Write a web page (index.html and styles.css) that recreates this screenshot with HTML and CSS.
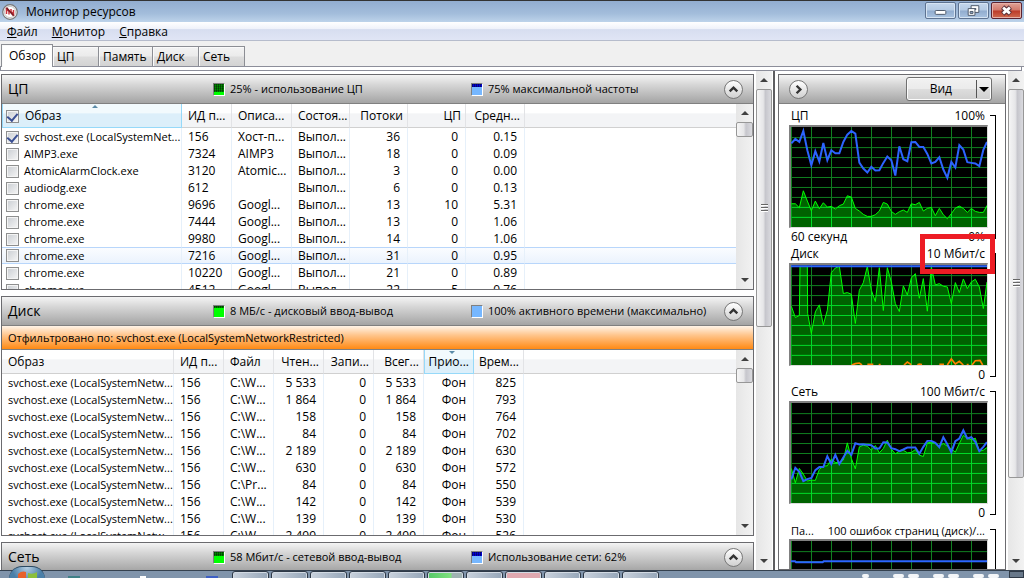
FILE: index.html
```html
<!DOCTYPE html>
<html lang="ru">
<head>
<meta charset="utf-8">
<title>Монитор ресурсов</title>
<link rel="stylesheet" href="styles.css">
</head>
<body>
<div class="screen">
  <header class="titlebar">
    <svg class="app-icon" viewBox="0 0 16 16"><circle cx="8" cy="8" r="7.3" fill="#f4f4f4" stroke="#777" stroke-width="1.2"/><circle cx="8" cy="8" r="5.6" fill="#fff" stroke="#aaa" stroke-width=".6"/><path d="M4.5 10V4.8L7 7.4v3M9 5v2.5l2.5 3V6" fill="none" stroke="#c8343c" stroke-width="1.5"/><path d="M4.6 3.8l7 8" stroke="#7d1c24" stroke-width="1.6"/></svg>
    <h1 class="title">Монитор ресурсов</h1>
    <div class="window-buttons">
      <button class="win-btn" aria-label="Свернуть"><svg viewBox="0 0 30 15"><rect x="9.500" y="7.500" width="11" height="4" rx="1" fill="#fff" stroke="#4d5869"/></svg></button>
      <button class="win-btn" aria-label="Восстановить"><svg viewBox="0 0 30 15"><path d="M12.500 2.500h8v7h-8z" fill="#fff" stroke="#4d5869"/><path d="M15.500 5.500h2v1h-2z" fill="#8fa9c8" stroke="#4d5869"/><path d="M9.500 5.500h7v7h-7z" fill="#fff" stroke="#4d5869"/><path d="M11.500 8.500h3v2h-3z" fill="#8fa9c8" stroke="#4d5869"/></svg></button>
      <button class="win-btn win-close" aria-label="Закрыть"><svg viewBox="0 0 30 15"><path d="M11 4l8 7M19 4l-8 7" stroke="#5a3038" stroke-width="5"/><path d="M11.500 4.500l7 6M18.500 4.500l-7 6" stroke="#fff" stroke-width="2.800"/></svg></button>
    </div>
  </header>
  <nav class="menubar">
    <button class="menu"><u>Ф</u>айл</button>
    <button class="menu"><u>М</u>онитор</button>
    <button class="menu"><u>С</u>правка</button>
  </nav>
  <div class="tabs" role="tablist">
    <button class="tab active" role="tab" aria-selected="true">Обзор</button>
    <button class="tab tab-s" role="tab">ЦП</button>
    <button class="tab tab-l" role="tab">Память</button>
    <button class="tab tab-s" role="tab">Диск</button>
    <button class="tab tab-s" role="tab">Сеть</button>
  </div>
  <div class="tab-edge"></div>
  <main class="workspace">
    <div class="panels">
      <section class="panel">
        <div class="panel-head">
          <h2>ЦП</h2>
          <span class="meter"><i class="led green"><b class="lvl-25"></b></i>25% - использование ЦП</span>
          <span class="meter"><i class="led blue"><b class="lvl-75"></b></i>75% максимальной частоты</span>
          <button class="round" aria-label="Свернуть ЦП"><svg viewBox="0 0 18 18"><path d="M5 11l4-4 4 4" fill="none" stroke="#333" stroke-width="2.500"/></svg></button>
        </div>
        <div class="list">
          <table class="grid cpu">
            <colgroup><col class="w-cpu-name"><col class="w50"><col class="w60"><col class="w58"><col class="w58"><col class="w58"><col class="w59"><col></colgroup>
            <thead><tr><th class="sorted up"><label><input type="checkbox" checked>Образ</label></th><th>ИД п...</th><th>Описа...</th><th>Состоя...</th><th class="n">Потоки</th><th class="n">ЦП</th><th class="n">Средн...</th><th></th></tr></thead>
            <tbody>
              <tr><td><label><input type="checkbox" checked>svchost.exe (LocalSystemNet...</label></td><td>156</td><td>Хост-п...</td><td>Выпол...</td><td class="n">36</td><td class="n">0</td><td class="n">0.15</td><td></td></tr>
              <tr><td><label><input type="checkbox">AIMP3.exe</label></td><td>7324</td><td>AIMP3</td><td>Выпол...</td><td class="n">18</td><td class="n">0</td><td class="n">0.09</td><td></td></tr>
              <tr><td><label><input type="checkbox">AtomicAlarmClock.exe</label></td><td>3120</td><td>Atomic...</td><td>Выпол...</td><td class="n">3</td><td class="n">0</td><td class="n">0.00</td><td></td></tr>
              <tr><td><label><input type="checkbox">audiodg.exe</label></td><td>612</td><td></td><td>Выпол...</td><td class="n">6</td><td class="n">0</td><td class="n">0.13</td><td></td></tr>
              <tr><td><label><input type="checkbox">chrome.exe</label></td><td>9696</td><td>Googl...</td><td>Выпол...</td><td class="n">13</td><td class="n">10</td><td class="n">5.31</td><td></td></tr>
              <tr><td><label><input type="checkbox">chrome.exe</label></td><td>7444</td><td>Googl...</td><td>Выпол...</td><td class="n">13</td><td class="n">0</td><td class="n">1.06</td><td></td></tr>
              <tr><td><label><input type="checkbox">chrome.exe</label></td><td>9980</td><td>Googl...</td><td>Выпол...</td><td class="n">14</td><td class="n">0</td><td class="n">1.06</td><td></td></tr>
              <tr class="hover"><td><label><input type="checkbox">chrome.exe</label></td><td>7216</td><td>Googl...</td><td>Выпол...</td><td class="n">31</td><td class="n">0</td><td class="n">0.95</td><td></td></tr>
              <tr><td><label><input type="checkbox">chrome.exe</label></td><td>10220</td><td>Googl...</td><td>Выпол...</td><td class="n">21</td><td class="n">0</td><td class="n">0.89</td><td></td></tr>
              <tr><td><label><input type="checkbox">chrome.exe</label></td><td>4512</td><td>Googl...</td><td>Выпол...</td><td class="n">22</td><td class="n">5</td><td class="n">0.76</td><td></td></tr>
            </tbody>
          </table>
          <div class="scroll"><button class="arrow up" aria-label="Вверх"></button><div class="track"><div class="thumb small"></div></div><button class="arrow down" aria-label="Вниз"></button></div>
        </div>
      </section>
      <section class="panel">
        <div class="panel-head">
          <h2>Диск</h2>
          <span class="meter"><i class="led green"><b class="lvl-85"></b></i>8 МБ/с - дисковый ввод-вывод</span>
          <span class="meter"><i class="led blue"><b class="lvl-100"></b></i>100% активного времени (максимально)</span>
          <button class="round" aria-label="Свернуть Диск"><svg viewBox="0 0 18 18"><path d="M5 11l4-4 4 4" fill="none" stroke="#333" stroke-width="2.500"/></svg></button>
        </div>
        <p class="filter">Отфильтровано по: svchost.exe (LocalSystemNetworkRestricted)</p>
        <div class="list">
          <table class="grid disk">
            <colgroup><col class="w-disk-name"><col class="w50"><col class="w50"><col class="w50"><col class="w50"><col class="w50"><col class="w50"><col class="w50"><col></colgroup>
            <thead><tr><th>Образ</th><th>ИД п...</th><th>Файл</th><th class="n">Чтен...</th><th class="n">Запи...</th><th class="n">Всег...</th><th class="n sorted down">Прио...</th><th class="n">Врем...</th><th></th></tr></thead>
            <tbody>
              <tr><td>svchost.exe (LocalSystemNetw...</td><td>156</td><td>C:\W...</td><td class="n">5 533</td><td class="n">0</td><td class="n">5 533</td><td class="n">Фон</td><td class="n">825</td><td></td></tr>
              <tr><td>svchost.exe (LocalSystemNetw...</td><td>156</td><td>C:\W...</td><td class="n">1 864</td><td class="n">0</td><td class="n">1 864</td><td class="n">Фон</td><td class="n">793</td><td></td></tr>
              <tr><td>svchost.exe (LocalSystemNetw...</td><td>156</td><td>C:\W...</td><td class="n">158</td><td class="n">0</td><td class="n">158</td><td class="n">Фон</td><td class="n">764</td><td></td></tr>
              <tr><td>svchost.exe (LocalSystemNetw...</td><td>156</td><td>C:\W...</td><td class="n">84</td><td class="n">0</td><td class="n">84</td><td class="n">Фон</td><td class="n">702</td><td></td></tr>
              <tr><td>svchost.exe (LocalSystemNetw...</td><td>156</td><td>C:\W...</td><td class="n">2 189</td><td class="n">0</td><td class="n">2 189</td><td class="n">Фон</td><td class="n">630</td><td></td></tr>
              <tr><td>svchost.exe (LocalSystemNetw...</td><td>156</td><td>C:\W...</td><td class="n">630</td><td class="n">0</td><td class="n">630</td><td class="n">Фон</td><td class="n">572</td><td></td></tr>
              <tr><td>svchost.exe (LocalSystemNetw...</td><td>156</td><td>C:\Pr...</td><td class="n">84</td><td class="n">0</td><td class="n">84</td><td class="n">Фон</td><td class="n">550</td><td></td></tr>
              <tr><td>svchost.exe (LocalSystemNetw...</td><td>156</td><td>C:\W...</td><td class="n">142</td><td class="n">0</td><td class="n">142</td><td class="n">Фон</td><td class="n">539</td><td></td></tr>
              <tr><td>svchost.exe (LocalSystemNetw...</td><td>156</td><td>C:\W...</td><td class="n">139</td><td class="n">0</td><td class="n">139</td><td class="n">Фон</td><td class="n">530</td><td></td></tr>
              <tr><td>svchost.exe (LocalSystemNetw...</td><td>156</td><td>C:\W...</td><td class="n">2 499</td><td class="n">0</td><td class="n">2 499</td><td class="n">Фон</td><td class="n">526</td><td></td></tr>
            </tbody>
          </table>
          <div class="scroll"><button class="arrow up" aria-label="Вверх"></button><div class="track"><div class="thumb small"></div></div><button class="arrow down" aria-label="Вниз"></button></div>
        </div>
      </section>
      <section class="panel">
        <div class="panel-head">
          <h2>Сеть</h2>
          <span class="meter"><i class="led green"><b class="lvl-60"></b></i>58 Мбит/с - сетевой ввод-вывод</span>
          <span class="meter"><i class="led blue"><b class="lvl-60"></b></i>Использование сети: 62%</span>
          <button class="round" aria-label="Развернуть Сеть"><svg viewBox="0 0 18 18"><path d="M5 11l4-4 4 4" fill="none" stroke="#333" stroke-width="2.500"/></svg></button>
        </div>
      </section>
    </div>
    <div class="scroll outer"><button class="arrow up" aria-label="Вверх"></button><div class="track"><div class="thumb half"></div></div><button class="arrow down" aria-label="Вниз"></button></div>
    <aside class="side">
      <section class="panel charts">
        <div class="panel-head side-head">
          <button class="round" aria-label="Скрыть графики"><svg viewBox="0 0 18 18"><path d="M7 5l4 4-4 4" fill="none" stroke="#333" stroke-width="2.500"/></svg></button>
          <button class="view">Вид<span class="drop"></span></button>
        </div>
        <div class="graphs">
          <figure class="graph">
            <figcaption><span>ЦП</span><span>100%</span></figcaption>
            <svg class="plot" viewBox="33 80 588 301" preserveAspectRatio="none">
              <defs><clipPath id="c1"><path d="M34,311 46,311 58,323 70,272 82,303 94,332 106,303 118,326 130,308 142,321 154,319 166,327 178,317 190,312 202,287 214,291 226,325 238,333 250,343 262,349 274,349 286,344 298,333 310,307 322,312 334,334 346,343 358,335 370,330 382,337 394,311 406,314 418,307 430,333 442,325 454,322 466,347 478,325 490,344 502,356 514,341 526,324 538,318 550,325 562,337 574,325 586,334 598,337 610,337 621,316V381H34z"/></clipPath></defs>
              <path class="lines" d="M34.500 80v301m60-301v301m60-301v301m60-301v301m60-301v301m60-301v301m60-301v301m60-301v301m60-301v301m60-301v301M33 112h588M33 142h588M33 172h588M33 202h588M33 232h588M33 262h588M33 292h588M33 322h588M33 352h588"/>
              <g clip-path="url(#c1)"><path class="area" d="M33 80h588v301H33z"/><path class="lines lit" d="M34.500 80v301m60-301v301m60-301v301m60-301v301m60-301v301m60-301v301m60-301v301m60-301v301m60-301v301m60-301v301M33 292h588M33 322h588M33 352h588"/></g>
              <path class="edge" d="M34,311 46,311 58,323 70,272 82,303 94,332 106,303 118,326 130,308 142,321 154,319 166,327 178,317 190,312 202,287 214,291 226,325 238,333 250,343 262,349 274,349 286,344 298,333 310,307 322,312 334,334 346,343 358,335 370,330 382,337 394,311 406,314 418,307 430,333 442,325 454,322 466,347 478,325 490,344 502,356 514,341 526,324 538,318 550,325 562,337 574,325 586,334 598,337 610,337 621,316"/>
              <path class="trace" d="M34,129 46,116 58,125 70,92 82,150 94,195 106,153 118,184 130,128 142,180 154,150 166,159 178,159 190,125 202,103 214,92 226,100 238,187 250,205 262,217 274,200 286,211 298,210 310,188 322,169 334,180 346,226 358,138 370,177 382,183 394,126 406,125 418,140 430,140 442,161 454,190 466,185 478,171 490,208 502,233 514,185 526,202 538,135 550,148 562,186 574,188 586,190 598,198 610,149 621,125"/>
            </svg>
            <div class="foot"><span>60 секунд</span><span>0%</span></div>
            <div class="bracket"></div>
          </figure>
          <figure class="graph">
            <figcaption><span>Диск</span><span>10 Мбит/с</span></figcaption>
            <svg class="plot" viewBox="33 104 588 301" preserveAspectRatio="none">
              <defs><clipPath id="c2"><path d="M34,228 46,262 58,256 60,108 82,108 83,250 94,310 106,245 118,224 130,284 142,240 154,127 166,113 178,108 190,190 202,187 214,192 226,280 238,180 250,157 262,108 274,180 286,214 298,112 310,241 322,112 334,155 346,220 358,244 370,167 382,194 394,143 406,130 418,204 430,145 442,243 454,110 466,164 478,160 490,168 502,170 514,220 526,157 538,187 550,146 562,175 574,155 586,147 598,170 610,235 621,155V405H34z"/></clipPath></defs>
              <path class="lines" d="M34.500 104v301m60-301v301m60-301v301m60-301v301m60-301v301m60-301v301m60-301v301m60-301v301m60-301v301m60-301v301M33 136h588M33 166h588M33 196h588M33 226h588M33 256h588M33 286h588"/>
              <g clip-path="url(#c2)"><path class="area" d="M33 104h588v301H33z"/><path class="lines lit" d="M34.500 104v301m60-301v301m60-301v301m60-301v301m60-301v301m60-301v301m60-301v301m60-301v301m60-301v301m60-301v301M33 136h588M33 166h588M33 196h588M33 226h588M33 256h588M33 286h588M33 316h588M33 346h588M33 376h588"/></g>
              <path class="edge" d="M34,228 46,262 58,256 60,108 82,108 83,250 94,310 106,245 118,224 130,284 142,240 154,127 166,113 178,108 190,190 202,187 214,192 226,280 238,180 250,157 262,108 274,180 286,214 298,112 310,241 322,112 334,155 346,220 358,244 370,167 382,194 394,143 406,130 418,204 430,145 442,243 454,110 466,164 478,160 490,168 502,170 514,220 526,157 538,187 550,146 562,175 574,155 586,147 598,170 610,235 621,155"/>
              <path class="trace" d="M33 108h588"/>
              <path class="hot" d="M215,405 226,401 238,399 246,405M262,403H280M296,404h6M372,405 382,396 394,404M412,404 418,402 426,404M478,403H492M502,405 514,387 526,402 538,394 550,405M560,404h6M576,405 586,392 600,391 608,405"/>
            </svg>
            <div class="foot"><span></span><span>0</span></div>
            <div class="bracket"></div>
            <div class="callout"></div>
          </figure>
          <figure class="graph">
            <figcaption><span>Сеть</span><span>100 Мбит/с</span></figcaption>
            <svg class="plot" viewBox="33 68 588 301" preserveAspectRatio="none">
              <defs><clipPath id="c3"><path d="M34,265 46,308 58,265 70,282 82,303 94,300 106,301 118,268 130,258 142,257 154,237 166,247 178,248 190,240 202,188 214,235 226,266 238,200 250,195 262,198 274,210 286,196 298,218 310,205 322,180 334,207 346,221 358,213 370,210 382,218 394,217 406,208 418,225 430,229 442,188 454,186 466,190 478,198 490,190 502,198 514,206 526,216 538,190 550,165 562,175 574,178 586,174 598,213 610,210 621,202V369H34z"/></clipPath></defs>
              <path class="lines" d="M34.500 68v301m60-301v301m60-301v301m60-301v301m60-301v301m60-301v301m60-301v301m60-301v301m60-301v301m60-301v301M33 100h588M33 130h588M33 160h588M33 190h588M33 220h588M33 250h588M33 280h588"/>
              <g clip-path="url(#c3)"><path class="area" d="M33 68h588v301H33z"/><path class="lines lit" d="M34.500 68v301m60-301v301m60-301v301m60-301v301m60-301v301m60-301v301m60-301v301m60-301v301m60-301v301m60-301v301M33 190h588M33 220h588M33 250h588M33 280h588M33 310h588M33 340h588"/></g>
              <path class="edge" d="M34,265 46,308 58,265 70,282 82,303 94,300 106,301 118,268 130,258 142,257 154,237 166,247 178,248 190,240 202,188 214,235 226,266 238,200 250,195 262,198 274,210 286,196 298,218 310,205 322,180 334,207 346,221 358,213 370,210 382,218 394,217 406,208 418,225 430,229 442,188 454,186 466,190 478,198 490,190 502,198 514,206 526,216 538,190 550,165 562,175 574,178 586,174 598,213 610,210 621,202"/>
              <path class="trace" d="M34,298 46,263 58,275 70,303 82,297 94,294 106,270 118,261 130,261 142,228 154,252 166,224 178,252 190,232 202,212 214,224 226,189 238,193 250,192 262,194 274,195 286,205 298,205 310,186 322,187 334,204 346,207 358,213 370,208 382,202 394,202 406,202 418,221 430,200 442,182 454,182 466,188 478,201 490,171 502,192 514,216 526,183 538,175 550,150 562,175 574,171 586,185 598,213 610,200 621,186"/>
            </svg>
            <div class="foot"><span></span><span>0</span></div>
            <div class="bracket"></div>
          </figure>
          <figure class="graph">
            <figcaption class="long"><span>Па...</span><span>100 ошибок страниц (диск)/...</span></figcaption>
            <svg class="plot" viewBox="33 482 588 301" preserveAspectRatio="none">
              <path class="lines" d="M34.500 482v301m60-301v301m60-301v301m60-301v301m60-301v301m60-301v301m60-301v301m60-301v301m60-301v301m60-301v301M33 514h588M33 544h588M33 574h588"/>
              <path class="trace" d="M33 543h12l3 3h80l3-3h490"/>
            </svg>
            <div class="bracket"></div>
          </figure>
        </div>
      </section>
      <div class="scroll outer"><button class="arrow up" aria-label="Вверх"></button><div class="track"><div class="thumb most"></div></div><button class="arrow down" aria-label="Вниз"></button></div>
    </aside>
  </main>
  <footer class="taskbar">
    <div class="orb"><svg viewBox="0 0 36 36"><path d="M9 11c3-3 6-3 8-2v8c-3-1-6-1-8 1z" fill="#e8622c"/><path d="M19 10c3 1 6 1 9-1v8c-3 2-6 2-9 1z" fill="#8bbf3d"/></svg></div>
    <div class="quick"><i class="teal"></i><i class="white"></i><i class="navy"></i></div>
    <div class="tasks"><button aria-label="Окно 1"></button><button aria-label="Окно 2"></button><button aria-label="Окно 3"></button><button aria-label="Окно 4"></button><button aria-label="Окно 5"></button><button class="ok" aria-label="Окно 6"></button><button aria-label="Окно 7"></button><button class="alert" aria-label="Окно 8"></button><button aria-label="Окно 9"></button><button aria-label="Окно 10"></button><button aria-label="Окно 11"></button></div>
    <div class="clock"><i class="tiny"></i><i></i><i></i><i class="gap"></i><i></i><i class="gap"></i><i></i></div>
    <button class="peek" aria-label="Свернуть все окна"></button>
  </footer>
</div>
</body>
</html>
```
FILE: styles.css
```css
* { box-sizing: border-box; }
body { margin: 0; font: 12px/16px "Open Sans", "Noto Sans", sans-serif; color: #000; }
button { margin: 0; padding: 0; border: 0; background: none; font: inherit; color: inherit; }
h1, h2, p, figure { margin: 0; font-weight: normal; }
svg { display: block; }

.screen { display: flex; flex-direction: column; height: 100vh; overflow: hidden; background: #fff; }

.titlebar { display: flex; align-items: center; height: 22px; flex: none; padding: 0 2px; border-top: 1px solid #333; background: linear-gradient(#92add0, #a3bddb 60%, #bdd3ea); }
.app-icon { width: 16px; height: 16px; }
.title { flex: 1; padding-left: 8px; font-size: 12px; }
.window-buttons { display: flex; gap: 2px; height: 19px; }
.win-btn { width: 31px; height: 17px; border: 1px solid #5e7391; border-radius: 2px; background: linear-gradient(#c5d7ec, #b4cae3 48%, #91acce 52%, #a9c3e0); box-shadow: inset 0 0 0 1px #d6e4f3; }
.win-close { border-color: #5c2330; background: linear-gradient(#e0a297, #d2786a 48%, #bc3a28 52%, #cf6b50); box-shadow: inset 0 0 0 1px #e6b1a8; }
.win-btn svg { width: 29px; height: 15px; }

.menubar { display: flex; gap: 14px; height: 19px; flex: none; padding: 2px 7px 0; border-bottom: 1px solid #b6bccc; background: linear-gradient(#fff, #eff2fa 38%, #d7def0 42%, #e0e5f5); }
.menu { height: 16px; font-size: 12px; }

.tabs { display: flex; align-items: flex-end; height: 26px; flex: none; padding-left: 1px; background: #f0f0f0; border-bottom: 1px solid #8c8e9a; }
.tab { height: 20px; padding: 0 4px; border: 1px solid #8c8e94; border-width: 1px 1px 0 0; text-align: left; background: linear-gradient(#f3f3f3, #ebebeb 48%, #dddddd 52%, #d3d3d3); box-shadow: inset 1px 1px #fafafa; }
.tab.active { width: 52px; height: 23px; padding: 0 7px; border-left-width: 1px; background: #fff; margin-bottom: -1px; }
.tab-s { width: 46px; }
.tab-l { width: 54px; }
.tab-edge { height: 4px; flex: none; margin-right: 2px; border: 1px solid #8c8e9a; border-top: 0; background: #fff; }

.workspace { display: flex; flex: 1; min-height: 0; overflow: hidden; }
.panels { flex: 1; min-width: 0; display: flex; flex-direction: column; gap: 6px; padding: 3px 2px 0 1px; }
.panel { flex: none; border: 1px solid #6b6b6f; background: #fff; }
.panel-head { display: grid; grid-template-columns: 205px 258px minmax(0, 1fr) auto; align-items: center; height: 29px; padding: 0 10px 0 6px; border-bottom: 1px solid #808080; background: linear-gradient(#f4f4f4, #d6d6d6 35%, #a4a4a4); }
.panel-head h2 { font-size: 14px; }
.meter { display: flex; align-items: center; gap: 5px; font-size: 11px; white-space: nowrap; }
.led { position: relative; width: 12px; height: 13px; border: 1px solid #808080; border-right-color: #fff; border-bottom-color: #fff; }
.led.green { background: #00ff00; }
.led.blue { background: #76b7ff; }
.led b { position: absolute; inset: 0 0 auto; background: #008a00; }
.led.blue b { background: #0000e0; }
.led b::after { content: ""; display: block; height: 100%; background: repeating-linear-gradient(90deg, #0006 0 1px, #0000 1px 2px), repeating-linear-gradient(#0003 0 1px, #0000 1px 2px); }
.lvl-25 { height: 8px; }
.lvl-75 { height: 3px; }
.lvl-85 { height: 2px; }
.lvl-100 { height: 0; }
.lvl-60 { height: 4px; }
.round { width: 19px; height: 19px; border: 1px solid #777; border-radius: 50%; background: linear-gradient(#fff, #d0d0d0); }
.round svg { width: 17px; height: 17px; }
.filter { height: 24px; padding: 4px 6px; border-bottom: 1px solid #808080; font-size: 11px; background: linear-gradient(#fff4e8, #ffc58c 40%, #ff8a14); }

.list { display: flex; height: 185px; overflow: hidden; }
.grid { flex: 1; width: 0; align-self: flex-start; table-layout: fixed; border-collapse: separate; border-spacing: 0; }
.w-cpu-name { width: 180px; }
.w-disk-name { width: 172px; }
.w50 { width: 50px; }
.w58 { width: 58px; }
.w59 { width: 59px; }
.w60 { width: 60px; }
.grid th, .grid td { padding: 1px 0 0 6px; font-weight: normal; text-align: left; white-space: nowrap; overflow: hidden; }
.grid th { height: 24px; border-right: 1px solid #e2e3e6; border-bottom: 1px solid #d0d0d0; background: linear-gradient(#fff 40%, #f3f4f6 42%); }
.grid td { height: 17px; border-right: 1px solid #e6f0fa; }
.grid td:first-child { font-size: 11px; }
.grid th:last-child, .grid td:last-child { border-right: 0; }
.grid th.n { padding: 1px 4px 0 0; text-align: right; }
.grid td.n { padding: 1px 7px 0 0; text-align: right; }
.grid th.sorted { position: relative; border-right-color: #96d9f9; border-bottom-color: #96d9f9; background: linear-gradient(#f2fafd 40%, #dceffa 42%); box-shadow: inset 1px 0 #96d9f9; }
.sorted::after { content: ""; position: absolute; left: 50%; top: 1px; border: 3px solid transparent; border-top-width: 0; border-bottom-color: #5b8ba8; }
.sorted.down::after { border-width: 3px 3px 0; border-top-color: #5b8ba8; }
.cpu th:first-child, .cpu td:first-child { padding-left: 4px; }
.cpu label { display: flex; align-items: center; gap: 5px; }
.cpu th label { gap: 6px; }
.cpu input { appearance: none; flex: none; display: grid; width: 13px; height: 13px; margin: 0; border: 1px solid #8e8f8f; background: linear-gradient(135deg, #c9cdd2, #f6f6f6); box-shadow: inset 0 0 0 1px #f4f4f4; }
.cpu input:checked::after { content: ""; place-self: center; width: 5px; height: 8px; border: solid #3a4f93; border-width: 0 2px 2px 0; transform: rotate(40deg); }
.hover td { padding-top: 0; background: linear-gradient(#fafcff, #ebf3fd); border-top: 1px solid #b8d6fb; border-bottom: 1px solid #b8d6fb; line-height: 15px; }
.grid .hover td { padding-top: 0; }

.scroll { display: flex; flex-direction: column; width: 17px; flex: none; background: linear-gradient(90deg, #e6e6e6, #f2f2f2); }
.scroll.outer { width: 16px; }
.arrow { display: grid; place-items: center; height: 18px; flex: none; }
.arrow::after { content: ""; border: 4px solid transparent; border-top-width: 0; border-bottom-color: #404040; }
.arrow.down::after { border-width: 4px 4px 0; border-top-color: #404040; }
.track { flex: 1; min-height: 0; }
.thumb { display: grid; place-items: center; border: 1px solid #979797; border-radius: 2px; background: linear-gradient(90deg, #f5f5f5, #e6e6e8 45%, #c6c6cc 60%, #dadadf); }
.thumb::after { content: ""; width: 7px; height: 8px; background: repeating-linear-gradient(#666 0 1px, #fff 1px 2px, #0000 2px 3px); }
.small { height: 15px; }
.small::after { display: none; }
.half { height: 51.500%; }
.most { height: 84%; }

.side { display: flex; width: 251px; flex: none; margin-left: 1px; padding-left: 3px; border-left: 2px solid #5d5d60; }
.charts { flex: 1; min-width: 0; margin: 3px 2px 0 0; overflow: hidden; }
.side-head { display: flex; justify-content: space-between; padding: 0 13px 0 10px; }
.view { display: flex; align-items: center; justify-content: flex-end; width: 86px; height: 24px; border: 1px solid #707070; border-radius: 3px; background: linear-gradient(#f2f2f2, #ebebeb 48%, #dddddd 52%, #cfcfcf); box-shadow: inset 0 0 0 1px #fbfbfb; }
.drop { display: grid; place-items: center; width: 15px; height: 18px; margin-left: 24px; border-left: 1px solid #555; }
.drop::after { content: ""; border: 5px solid transparent; border-bottom-width: 0; border-top-color: #000; }
.graphs { padding: 3px 9px 0 10px; }
.graph { position: relative; display: grid; grid-template: 18px 103px 17px / minmax(0, 1fr) 6px; column-gap: 2px; }
.graph figcaption, .foot { display: flex; justify-content: space-between; grid-column: 1; padding: 0 3px 0 2px; white-space: nowrap; }
.graph figcaption { padding-top: 1px; }
.graph .long { padding-top: 2px; font-size: 11px; }
.foot { align-items: center; }
.plot { width: 100%; height: 103px; grid-column: 1; border: 2px solid #808080; border-width: 2px 1px 1px 2px; border-right-color: #ddd; border-bottom-color: #ddd; background: #000; }
.bracket { grid-area: 1 / 2 / 4 / 3; margin: 8px 0 6px; border: 1px solid #000; border-left: 0; }
.callout { position: absolute; left: 131px; top: -11px; width: 75px; height: 40px; border: 5px solid #ed1c24; }
.lines { fill: none; stroke: #108020; stroke-width: 3; shape-rendering: crispEdges; }
.lines.lit { stroke: #00dc28; }
.area { fill: #006200; }
.edge { fill: none; stroke: #00ff00; stroke-width: 3; }
.trace { fill: none; stroke: #2c64ff; stroke-width: 6; }
.hot { fill: none; stroke: #ff8000; stroke-width: 5; }

.taskbar { position: relative; display: flex; height: 8px; flex: none; border-top: 1px solid #35414f; background: #8094ab; }
.orb { position: absolute; left: 9px; top: -5px; width: 36px; height: 13px; overflow: hidden; border-radius: 18px 18px 0 0; background: radial-gradient(circle at 50% 0, #b8d0e4, #4a7fa8 70%); border-top: 1px solid #2c4a63; }
.orb svg { width: 36px; height: 36px; margin-top: -4px; }
.quick { display: flex; align-items: flex-end; width: 232px; padding-left: 68px; gap: 60px; }
.quick i { width: 12px; height: 2px; background: #3f8087; }
.quick .white { width: 6px; background: #fff; }
.quick .navy { background: #3d5fc4; }
.tasks { display: flex; flex: 1; gap: 2px; }
.tasks button { width: 37px; height: 10px; border: 1px solid #2e3947; border-radius: 3px; background: linear-gradient(90deg, #c8d1dc, #97a7b9); box-shadow: inset 0 0 0 1px #d2dae3; }
.tasks .ok { background: linear-gradient(90deg, #55c868, #7fe07f 65%, #9fb2b2 70%); }
.tasks .alert { background: #e0a9b0; }
.clock { display: flex; align-items: flex-end; gap: 4px; padding-right: 10px; }
.clock i { width: 11px; height: 4px; border-radius: 2px; background: #f4f6f8; }
.clock .tiny { width: 7px; margin-right: 20px; }
.clock .gap { margin-left: 10px; }
.peek { width: 15px; border: 1px solid #2f3a47; background: #68788a; }
```
